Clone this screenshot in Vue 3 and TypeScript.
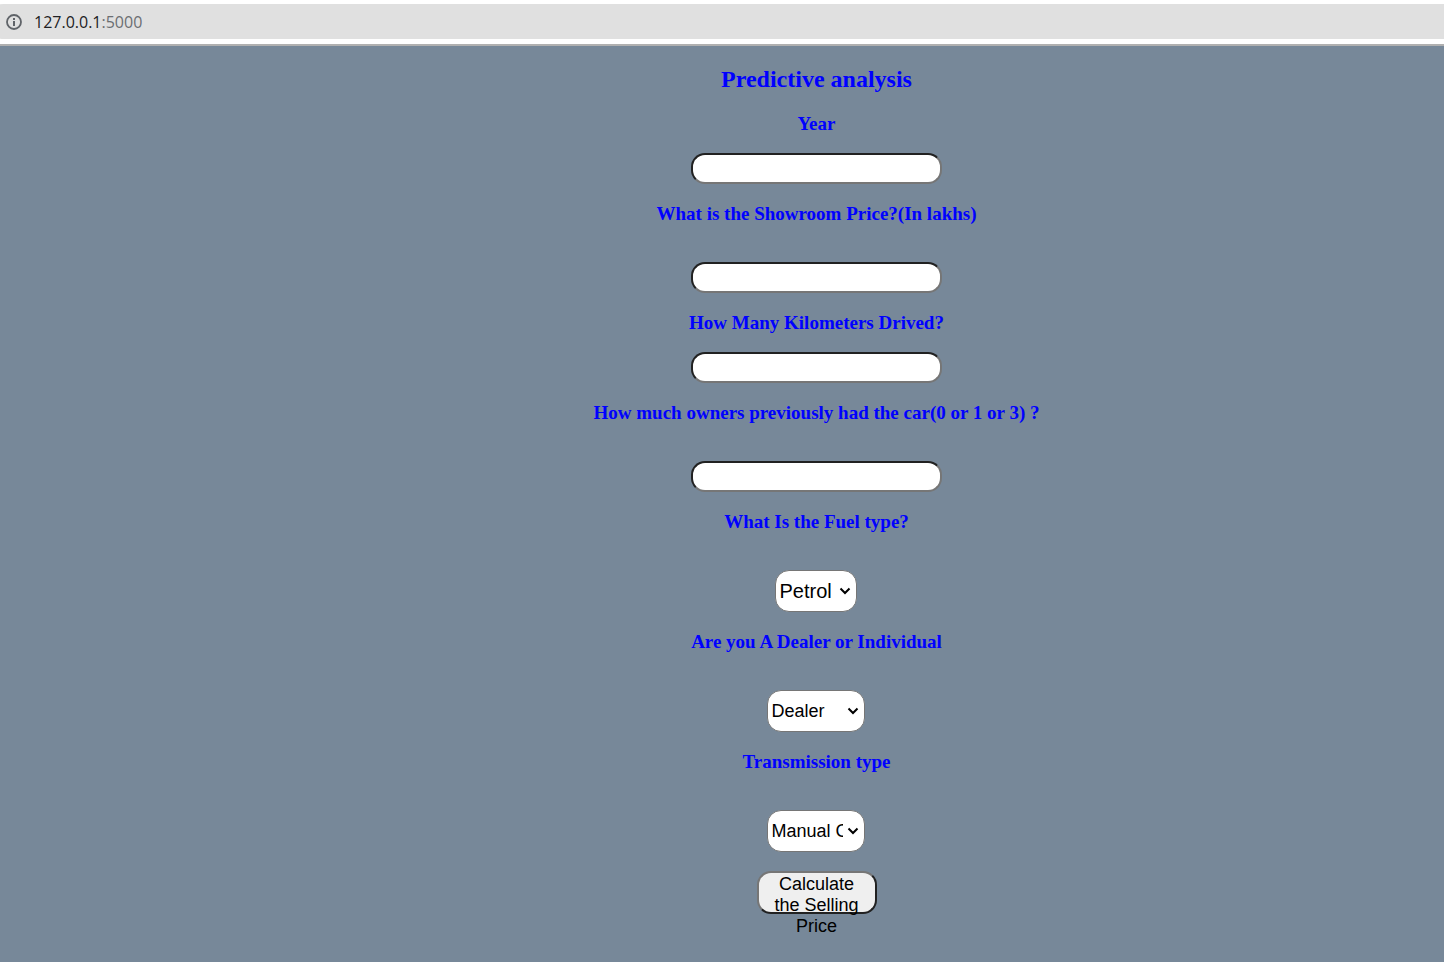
<script setup lang="ts">
import { reactive } from 'vue'

interface NumberField {
  id: string
  label: string
  tall: boolean
}

interface SelectField {
  id: string
  label: string
  size: 'narrow' | 'wide'
  options: string[]
}

const numberFields: NumberField[] = [
  { id: 'year', label: 'Year', tall: false },
  { id: 'price', label: 'What is the Showroom Price?(In lakhs)', tall: true },
  { id: 'kilometers', label: 'How Many Kilometers Drived?', tall: false },
  { id: 'owners', label: 'How much owners previously had the car(0 or 1 or 3) ?', tall: true },
]

const selectFields: SelectField[] = [
  { id: 'fuel', label: 'What Is the Fuel type?', size: 'narrow', options: ['Petrol', 'Diesel', 'CNG'] },
  { id: 'seller', label: 'Are you A Dealer or Individual', size: 'wide', options: ['Dealer', 'Individual'] },
  { id: 'transmission', label: 'Transmission type', size: 'wide', options: ['Manual Car', 'Automatic Car'] },
]

const values = reactive<Record<string, string>>({
  year: '',
  price: '',
  kilometers: '',
  owners: '',
  fuel: 'Petrol',
  seller: 'Dealer',
  transmission: 'Manual Car',
})
</script>

<template>
  <div class="window">
    <header class="toolbar">
      <div class="address">
        <svg class="info" viewBox="0 0 16 16" aria-hidden="true">
          <circle cx="8" cy="8" r="7" fill="none" stroke="#5f6368" stroke-width="1.8" />
          <rect x="7" y="4" width="2" height="2" fill="#5f6368" />
          <rect x="7" y="7" width="2" height="5" fill="#5f6368" />
        </svg>
        <span class="url">127.0.0.1<span class="port">:5000</span></span>
      </div>
    </header>
    <main class="page">
      <form class="form" @submit.prevent>
        <h1 class="title">Predictive analysis</h1>
        <div v-for="field in numberFields" :key="field.id" class="field" :class="{ tall: field.tall }">
          <label :for="field.id">{{ field.label }}</label>
          <input :id="field.id" v-model="values[field.id]" type="text" />
        </div>
        <div v-for="field in selectFields" :key="field.id" class="field tall">
          <label :for="field.id">{{ field.label }}</label>
          <div class="picker" :class="field.size">
            <select :id="field.id" v-model="values[field.id]">
              <option v-for="option in field.options" :key="option" :value="option">{{ option }}</option>
            </select>
            <svg class="chevron" viewBox="0 0 12 8" aria-hidden="true">
              <path d="M1.5 1.5 6 6l4.5-4.5" fill="none" stroke="#000" stroke-width="2" />
            </svg>
          </div>
        </div>
        <button type="submit">Calculate the Selling Price</button>
      </form>
    </main>
  </div>
</template>

<style>
body {
  margin: 0;
  background: #778899;
}
</style>

<style scoped>
.window {
  display: flex;
  flex-direction: column;
  min-height: 100vh;
  overflow-x: hidden;
}

.toolbar {
  padding: 4px 0 5px;
  border-bottom: 2px solid #b0b0b0;
  background: #fff;
}

.address {
  display: flex;
  align-items: center;
  gap: 12px;
  height: 35px;
  margin-left: -14px;
  padding-left: 20px;
  border-radius: 18px 0 0 18px;
  background: #e0e0e0;
}

.info {
  width: 16px;
  height: 16px;
}

.url {
  font: 16px/24px "Open Sans", sans-serif;
  color: #202124;
}

.port {
  color: #6b6e72;
}

.page {
  flex: 1;
  padding: 18px 0 24px 189px;
  background: #778899;
}

.form {
  display: flex;
  flex-direction: column;
  align-items: center;
  gap: 19px;
}

.title {
  margin: 0;
  font: bold 24px/30px "Liberation Serif", serif;
  color: #00f;
}

.field {
  display: flex;
  flex-direction: column;
  align-items: center;
  gap: 19px;
}

.tall {
  gap: 38px;
}

label {
  font: bold 19px/21px "Liberation Serif", serif;
  color: #00f;
}

input {
  box-sizing: border-box;
  width: 251px;
  height: 31px;
  border: 2px solid;
  border-color: #212121 #767676 #767676 #212121;
  border-radius: 14px;
  background: #fff;
  font: 18px/21px "Liberation Sans", sans-serif;
}

.picker {
  display: grid;
  align-items: center;
}

.picker > * {
  grid-area: 1 / 1;
}

select {
  box-sizing: border-box;
  width: 100%;
  height: 42px;
  padding: 0 21px 0 3px;
  border: 1px solid #767676;
  border-radius: 14px;
  background: #fff;
  appearance: none;
  font-family: "Liberation Sans", sans-serif;
  font-size: inherit;
  color: #000;
}

.chevron {
  justify-self: end;
  width: 12px;
  height: 8px;
  margin-right: 6px;
  pointer-events: none;
}

.narrow {
  width: 82px;
  font-size: 20px;
}

.wide {
  width: 98px;
  font-size: 18px;
}

button {
  box-sizing: border-box;
  width: 120px;
  height: 43px;
  padding: 1px 6px;
  border: 2px solid;
  border-color: #767676 #212121 #212121 #767676;
  border-radius: 14px;
  background: #efefef;
  font: 18px/21px "Liberation Sans", sans-serif;
  color: #000;
}
</style>
